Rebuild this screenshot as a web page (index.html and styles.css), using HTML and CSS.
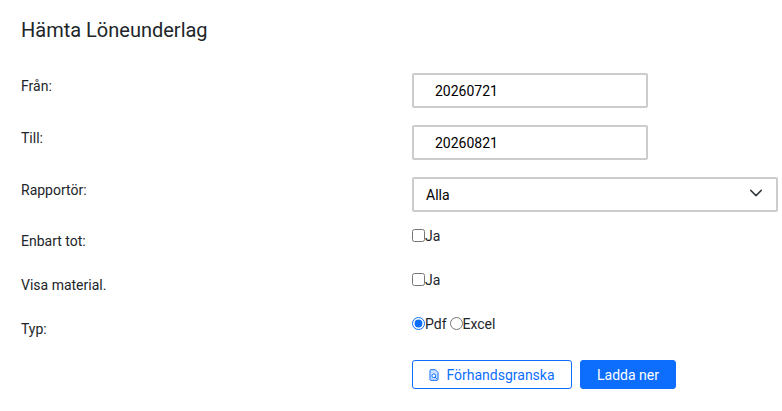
FILE: index.html
```html
<!DOCTYPE html>
<html lang="sv">
<head>
<meta charset="utf-8">
<title>Hämta Löneunderlag</title>
<link rel="stylesheet" href="styles.css">
</head>
<body>
<main class="page">
  <h1 class="title">Hämta Löneunderlag</h1>
  <form class="form">
    <div class="row row-field">
      <label class="label">Från:</label>
      <input class="input date" type="text" value="20260721">
    </div>
    <div class="row row-field">
      <label class="label">Till:</label>
      <input class="input date" type="text" value="20260821">
    </div>
    <div class="row row-field">
      <label class="label">Rapportör:</label>
      <div class="select">
        <span>Alla</span>
        <svg class="chevron" viewBox="0 0 16 16" width="16" height="16"><path d="M2 5l6 6 6-6" fill="none" stroke="#343a40" stroke-width="1.700" stroke-linecap="round" stroke-linejoin="round"/></svg>
      </div>
    </div>
    <div class="row row-check">
      <label class="label label-low">Enbart tot:</label>
      <div class="choices"><input type="checkbox" class="box"><span>Ja</span></div>
    </div>
    <div class="row row-check">
      <label class="label label-low">Visa material.</label>
      <div class="choices"><input type="checkbox" class="box"><span>Ja</span></div>
    </div>
    <div class="row row-check row-last">
      <label class="label label-low">Typ:</label>
      <div class="choices">
        <input type="radio" name="typ" class="box" checked><span>Pdf</span>
        <input type="radio" name="typ" class="box box-next"><span>Excel</span>
      </div>
    </div>
    <div class="row">
      <span></span>
      <div class="actions">
        <button type="button" class="btn btn-outline">
          <svg class="file-icon" viewBox="0 0 10 12" width="10" height="12">
            <path d="M1.500.7h4.800L9 3.400v7a.9.9 0 0 1-.9.9H1.900a.9.9 0 0 1-.9-.9V1.600a.9.9 0 0 1 .5-.9z" fill="#cfe2ff" stroke="#0d6efd" stroke-width="1" stroke-linejoin="round"/>
            <circle cx="4.800" cy="6.800" r="1.900" fill="#fff" stroke="#0d6efd" stroke-width="1"/>
            <path d="M6.200 8.200l1.300 1.300" stroke="#0d6efd" stroke-width="1" stroke-linecap="round"/>
          </svg>
          Förhandsgranska
        </button>
        <button type="button" class="btn btn-primary">Ladda ner</button>
      </div>
    </div>
  </form>
</main>
</body>
</html>
```
FILE: styles.css
```css
* { box-sizing: border-box; }
html, body { margin: 0; background: #fff; }
body {
  font-family: Roboto, "Liberation Sans", sans-serif;
  font-size: 14px;
  line-height: 21px;
  color: #212529;
  overflow: hidden;
}
.page { padding: 15px 4px 0 21px; }
.title {
  margin: 0 0 28px;
  font-size: 20px;
  font-weight: 400;
  line-height: 30px;
}
.row {
  display: grid;
  grid-template-columns: 391px 366px;
}
.row-field { height: 52px; }
.row-check { height: 44px; }
.row-last { height: 43px; }
.label { display: block; margin-top: 3px; }
.label-low { margin-top: 2px; }
.input {
  display: block;
  width: 236px;
  height: 35px;
  padding: 0 21px;
  border: 2px solid #ccc;
  border-radius: 2px;
  font: inherit;
  color: #000;
  outline: none;
}
.select {
  position: relative;
  height: 35px;
  padding: 6px 12px;
  border: 2px solid #ccc;
  border-radius: 2px;
  color: #000;
}
.chevron {
  position: absolute;
  right: 13px;
  top: 7px;
  width: 14px;
  height: 14px;
}
.choices { display: flex; align-items: flex-start; margin-top: -3px; }
.box { width: 13px; height: 13px; margin: 3px 0 0; accent-color: #0d6efd; flex: none; }
.box-next { margin-left: 3px; }
.actions { display: flex; gap: 8px; align-items: flex-start; }
.btn {
  height: 29px;
  padding: 0 16px;
  border-radius: 3px;
  font: inherit;
  line-height: 1;
  display: inline-flex;
  align-items: center;
  gap: 7px;
}
.file-icon { flex: none; }
.btn-outline { width: 160px; justify-content: center; background: #fff; color: #0d6efd; border: 1px solid #0d6efd; }
.btn-primary { width: 96px; justify-content: center; background: #0d6efd; color: #fff; border: 1px solid #0d6efd; }
```
